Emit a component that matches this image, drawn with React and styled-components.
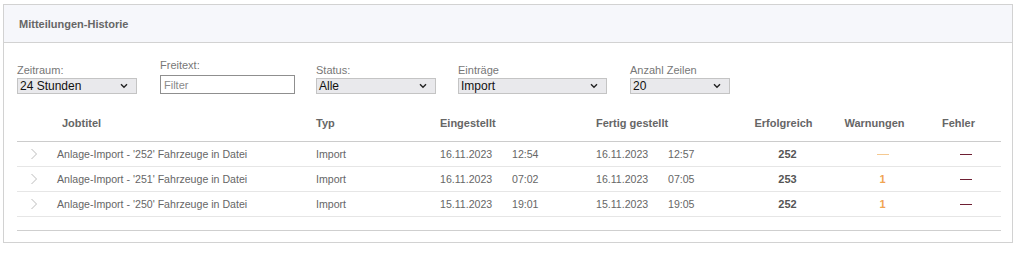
import React from "react";
import styled, { createGlobalStyle } from "styled-components";

const Global = createGlobalStyle`
  html, body { margin: 0; padding: 0; background: #fff; }
  body { font-family: "Liberation Sans", Arial, sans-serif; }
`;

const Panel = styled.section`
  margin: 4px 0 0 3px;
  width: 1008px;
  border: 1px solid #d2d2d2;
  padding-bottom: 11px;
  background: #fff;
`;

const PanelHeader = styled.header`
  height: 37px;
  background: #f6f7fb;
  border-bottom: 1px solid #d2d2d2;
  display: flex;
  align-items: center;
  padding-left: 15px;
  font-size: 11px;
  font-weight: bold;
  color: #666;
`;

const FilterRow = styled.div`
  display: flex;
  align-items: flex-end;
  padding: 15px 0 0 13px;
`;

const FilterGroup = styled.div`
  width: ${(p) => p.$w}px;
  flex: none;
  display: flex;
  flex-direction: column;
`;

const Label = styled.label`
  font-size: 11px;
  line-height: 14px;
  color: #777;
  margin-bottom: ${(p) => (p.$raised ? 3 : 1)}px;
`;

const FakeSelect = styled.div`
  width: ${(p) => p.$w}px;
  height: 16px;
  box-sizing: border-box;
  background: #e9e9ec;
  border: 1px solid #c4c4c4;
  display: flex;
  align-items: center;
  justify-content: space-between;
  padding: 0 8px 0 2px;
  font-size: 12px;
  color: #111;
`;

const TextInput = styled.input`
  width: ${(p) => p.$w}px;
  height: 19px;
  box-sizing: border-box;
  border: 1px solid #8f8f8f;
  padding: 0 3px;
  font-family: "Liberation Sans", Arial, sans-serif;
  font-size: 11px;
  color: #333;
  outline: none;
  &::placeholder { color: #8a8a8a; }
`;

const Table = styled.div`
  margin: 19px 11px 0 13px;
  border-bottom: 1px solid #cfcfcf;
`;

const cols = "40px 259px 124px 72px 84px 72px 72px 95px 95px 1fr";

const HeadRow = styled.div`
  display: grid;
  grid-template-columns: ${cols};
  padding: 3px 0 11px;
  line-height: 14px;
  border-bottom: 1px solid #cccccc;
  font-size: 11px;
  font-weight: bold;
  color: #666;
`;

const HeadCell = styled.div`
  grid-column: span ${(p) => p.$span || 1};
  text-align: ${(p) => p.$align || "left"};
  padding-left: ${(p) => p.$pl || 0}px;
  padding-right: ${(p) => p.$pr || 0}px;
  white-space: nowrap;
`;

const Row = styled.div`
  display: grid;
  grid-template-columns: ${cols};
  height: 24px;
  align-items: center;
  border-bottom: 1px solid #e6e6e6;
  font-size: 10.6px;
  line-height: 14px;
  color: #666;
`;

const Cell = styled.div`
  text-align: ${(p) => p.$align || "left"};
  font-weight: ${(p) => (p.$bold ? "bold" : "normal")};
  font-size: ${(p) => (p.$bold ? "11px" : "inherit")};
  color: ${(p) => p.$color || "inherit"};
  white-space: nowrap;
`;

const DashCell = styled.div`
  align-self: stretch;
  display: flex;
  justify-content: center;
  align-items: flex-start;
  padding-top: 12px;
`;

const Dash = styled.span`
  display: block;
  width: ${(p) => p.$w}px;
  height: 1px;
  background: ${(p) => p.$color};
`;

const ChevronCell = styled.div`
  display: flex;
  align-items: center;
  padding-left: 13px;
`;

const Filler = styled.div`
  height: 13px;
`;

const Chevron = () => (
  <svg width="8" height="12" viewBox="0 0 8 12">
    <polyline points="1.5,1 6.5,6 1.5,11" fill="none" stroke="#bdbdbd" strokeWidth="1" />
  </svg>
);

const Caret = () => (
  <svg width="8" height="6" viewBox="0 0 8 6">
    <polyline points="1,1.2 4,4.2 7,1.2" fill="none" stroke="#222" strokeWidth="1.4" />
  </svg>
);

const Select = ({ w, value }) => (
  <FakeSelect $w={w}>
    <span>{value}</span>
    <Caret />
  </FakeSelect>
);

const rows = [
  { n: "252", d1: "16.11.2023", t1: "12:54", d2: "16.11.2023", t2: "12:57", ok: "252", warn: null },
  { n: "251", d1: "16.11.2023", t1: "07:02", d2: "16.11.2023", t2: "07:05", ok: "253", warn: "1" },
  { n: "250", d1: "15.11.2023", t1: "19:01", d2: "15.11.2023", t2: "19:05", ok: "252", warn: "1" },
];

export default function App() {
  return (
    <>
      <Global />
      <Panel>
        <PanelHeader>Mitteilungen-Historie</PanelHeader>
        <FilterRow>
          <FilterGroup $w={143}>
            <Label>Zeitraum:</Label>
            <Select w={120} value="24 Stunden" />
          </FilterGroup>
          <FilterGroup $w={156}>
            <Label $raised>Freitext:</Label>
            <TextInput $w={135} placeholder="Filter" />
          </FilterGroup>
          <FilterGroup $w={142}>
            <Label>Status:</Label>
            <Select w={120} value="Alle" />
          </FilterGroup>
          <FilterGroup $w={172}>
            <Label>Einträge</Label>
            <Select w={149} value="Import" />
          </FilterGroup>
          <FilterGroup $w={120}>
            <Label>Anzahl Zeilen</Label>
            <Select w={100} value="20" />
          </FilterGroup>
        </FilterRow>
        <Table>
          <HeadRow>
            <HeadCell />
            <HeadCell $pl={5}>Jobtitel</HeadCell>
            <HeadCell>Typ</HeadCell>
            <HeadCell $span={2}>Eingestellt</HeadCell>
            <HeadCell $span={2}>Fertig gestellt</HeadCell>
            <HeadCell $align="center" $pr={8}>Erfolgreich</HeadCell>
            <HeadCell $align="center" $pr={16}>Warnungen</HeadCell>
            <HeadCell $align="center" $pr={14}>Fehler</HeadCell>
          </HeadRow>
          {rows.map((r) => (
            <Row key={r.n}>
              <ChevronCell>
                <Chevron />
              </ChevronCell>
              <Cell>Anlage-Import - '{r.n}' Fahrzeuge in Datei</Cell>
              <Cell>Import</Cell>
              <Cell>{r.d1}</Cell>
              <Cell>{r.t1}</Cell>
              <Cell>{r.d2}</Cell>
              <Cell>{r.t2}</Cell>
              <Cell $align="center" $bold $color="#555">{r.ok}</Cell>
              {r.warn ? (
                <Cell $align="center" $bold $color="#f0a452">{r.warn}</Cell>
              ) : (
                <DashCell>
                  <Dash $w={12} $color="#f5c991" />
                </DashCell>
              )}
              <DashCell>
                <Dash $w={12} $color="#6e1f33" />
              </DashCell>
            </Row>
          ))}
          <Filler />
        </Table>
      </Panel>
    </>
  );
}
